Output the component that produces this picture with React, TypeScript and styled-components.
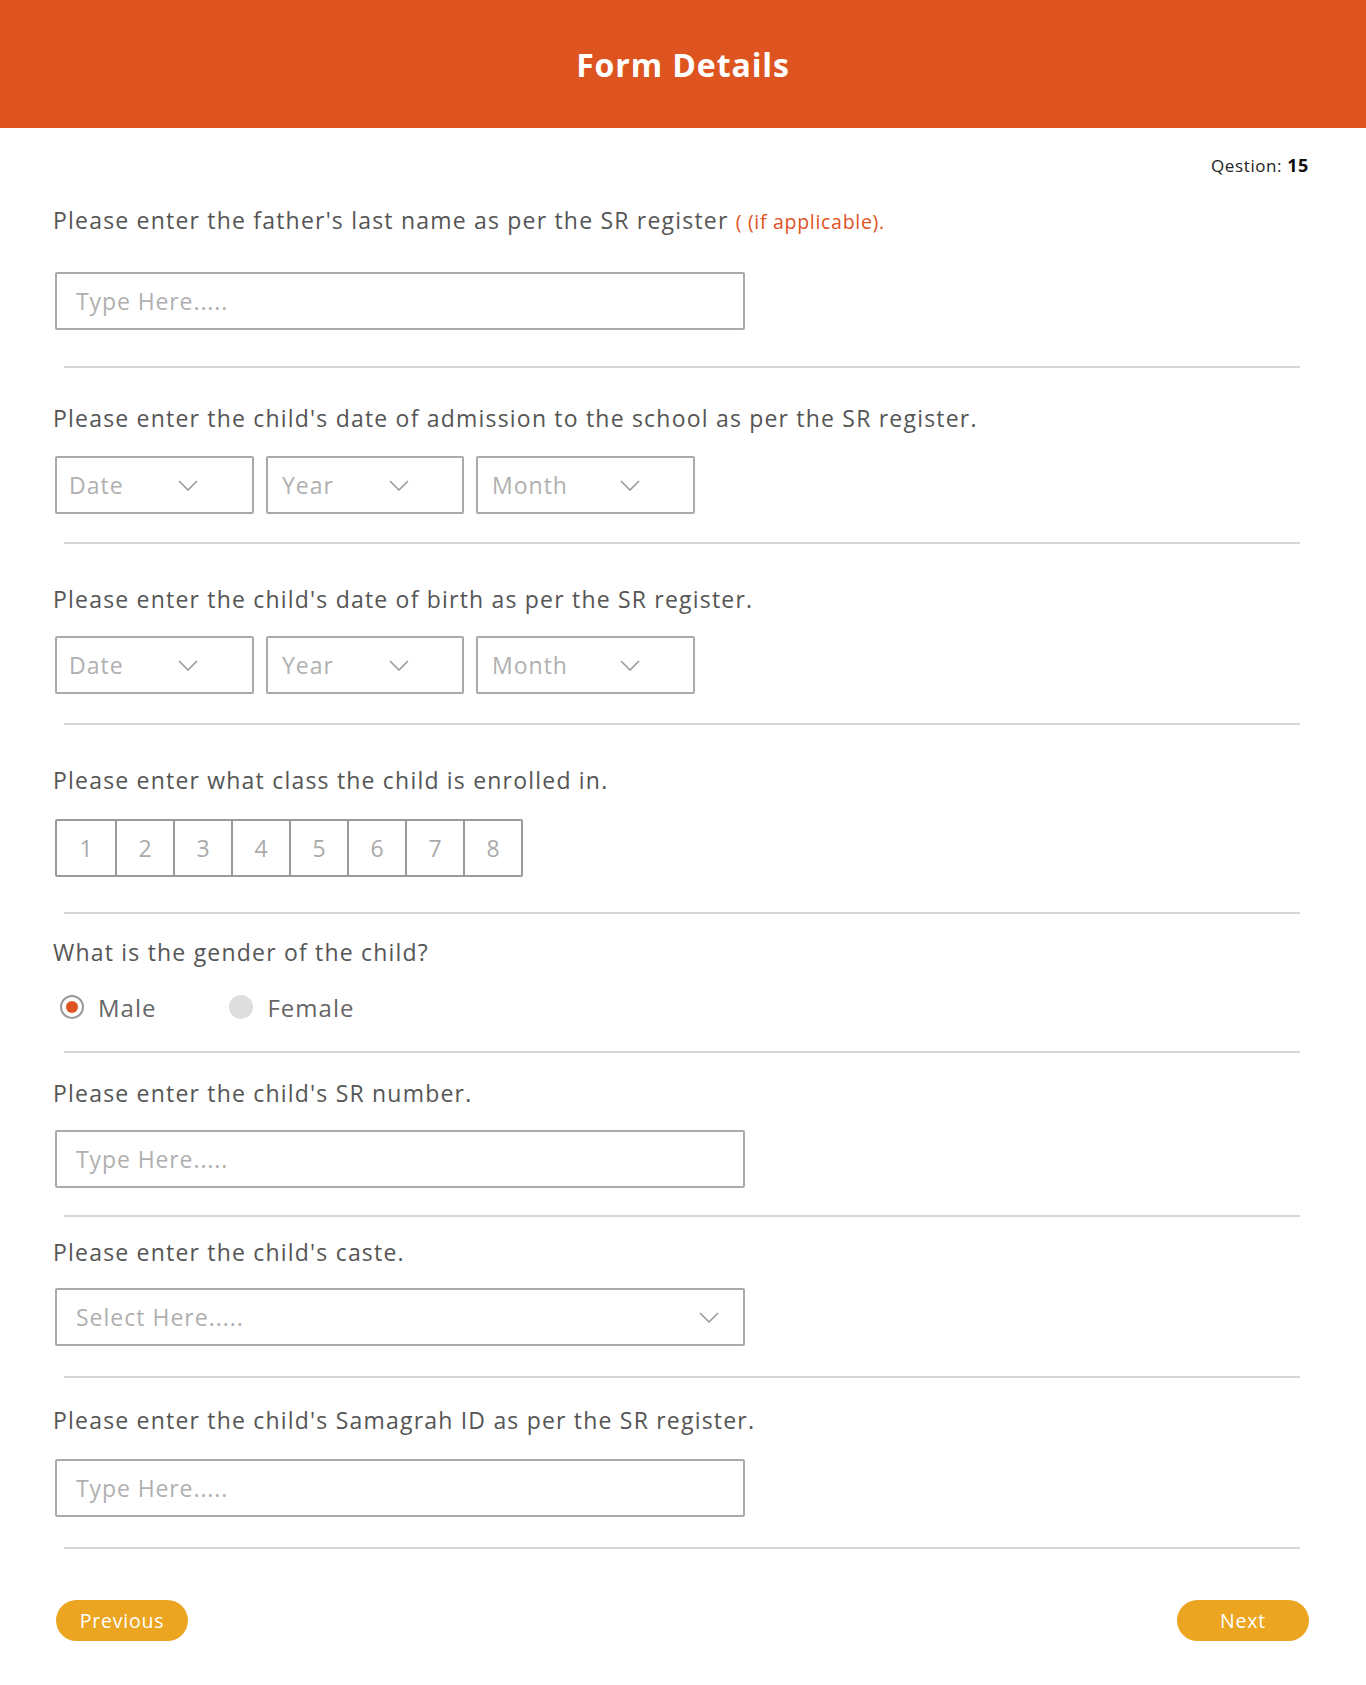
import React from "react";
import styled, { createGlobalStyle } from "styled-components";

const GlobalStyle = createGlobalStyle`
  html, body { margin: 0; padding: 0; background: #ffffff; }
  body { font-family: "Open Sans", "Noto Sans", sans-serif; color: #555555; }
  * { box-sizing: border-box; }
`;

const Page = styled.div`
  width: 1366px;
  min-height: 1685px;
  background: #fff;
`;

const Header = styled.header`
  height: 128px;
  background: #dd5420;
  display: flex;
  align-items: center;
  justify-content: center;
`;

const Title = styled.h1`
  margin: 0;
  color: #fff;
  font-size: 32px;
  font-weight: 700;
  letter-spacing: 0.9px;
`;

const Body = styled.main`
  padding: 0 57px 44px 53px;
`;

const Counter = styled.div`
  margin-top: 27px;
  text-align: right;
  font-size: 17px;
  line-height: 20px;
  color: #222;
  letter-spacing: 0.6px;
  b { font-weight: 700; font-size: 18px; color: #111; }
`;

const Section = styled.section<{ $top: number; $gap: number; $bottom: number }>`
  padding-top: ${(p) => p.$top}px;
  display: flex;
  flex-direction: column;
  align-items: flex-start;
  & > :nth-child(2) {
    margin-top: ${(p) => p.$gap}px;
    margin-left: 2px;
  }
  & > hr { margin-top: ${(p) => p.$bottom}px; }
`;

const Label = styled.p`
  margin: 0;
  font-size: 23px;
  line-height: 28px;
  color: #555;
  letter-spacing: 1.2px;
`;

const Hint = styled.span`
  color: #e0521f;
  font-size: 19.5px;
  letter-spacing: 0.7px;
`;

const Divider = styled.hr`
  align-self: stretch;
  border: none;
  height: 2px;
  background: #d6d6d6;
  margin-bottom: 0;
  margin-left: 11px;
  margin-right: 9px;
`;

const TextField = styled.input`
  width: 690px;
  height: 58px;
  border: 2px solid #aaaaaa;
  border-radius: 2px;
  padding: 0 19px;
  font-family: inherit;
  font-size: 23px;
  letter-spacing: 0.9px;
  color: #555;
  outline: none;
  &::placeholder { color: #b0b0b0; }
`;

const SelectRow = styled.div`
  display: flex;
  gap: 12px;
`;

const SelectBox = styled.div<{ $w: number; $pl: number; $pr: number }>`
  width: ${(p) => p.$w}px;
  height: 58px;
  border: 2px solid #aaaaaa;
  border-radius: 2px;
  padding: 0 ${(p) => p.$pr}px 0 ${(p) => p.$pl}px;
  display: flex;
  align-items: center;
  justify-content: space-between;
  font-size: 23px;
  letter-spacing: 1px;
  color: #b0b0b0;
`;

const Chevron = () => (
  <svg width="20" height="11" viewBox="0 0 20 11" fill="none">
    <polyline points="1,1 10,10 19,1" stroke="#9a9a9a" strokeWidth="1.6" fill="none" />
  </svg>
);

const ClassGrid = styled.div`
  display: flex;
  border: 2px solid #9a9a9a;
  border-radius: 2px;
`;

const ClassCell = styled.div`
  width: 58px;
  height: 54px;
  display: flex;
  align-items: center;
  justify-content: center;
  font-size: 23px;
  color: #aaaaaa;
  & + & { border-left: 2px solid #9a9a9a; }
`;

const RadioGroup = styled.div`
  display: flex;
  align-items: center;
  gap: 73px;
  height: 28px;
  padding-left: 5px;
`;

const RadioOption = styled.label`
  display: flex;
  align-items: center;
  gap: 14px;
  font-size: 24px;
  letter-spacing: 1px;
  color: #666;
`;

const RadioDot = styled.span<{ $checked?: boolean }>`
  width: 24px;
  height: 24px;
  border-radius: 50%;
  display: flex;
  align-items: center;
  justify-content: center;
  background: ${(p) => (p.$checked ? "#fff" : "#dedede")};
  border: ${(p) => (p.$checked ? "2px solid #9a9a9a" : "none")};
  &::after {
    content: "";
    width: 12px;
    height: 12px;
    border-radius: 50%;
    background: ${(p) => (p.$checked ? "#dd5420" : "transparent")};
  }
`;

const Footer = styled.div`
  margin-top: 51px;
  display: flex;
  justify-content: space-between;
  padding-left: 3px;
`;

const PillButton = styled.button`
  width: 132px;
  height: 41px;
  border: none;
  border-radius: 21px;
  background: #eba521;
  color: #fff;
  font-family: inherit;
  font-size: 19.5px;
  letter-spacing: 0.8px;
  cursor: pointer;
`;

const DateSelects = () => (
  <SelectRow>
    <SelectBox $w={199} $pl={12} $pr={54}>Date<Chevron /></SelectBox>
    <SelectBox $w={198} $pl={14} $pr={53}>Year<Chevron /></SelectBox>
    <SelectBox $w={219} $pl={14} $pr={53}>Month<Chevron /></SelectBox>
  </SelectRow>
);

export default function App() {
  return (
    <Page>
      <GlobalStyle />
      <Header>
        <Title>Form Details</Title>
      </Header>
      <Body>
        <Counter>
          Qestion: <b>15</b>
        </Counter>

        <Section $top={30} $gap={36} $bottom={36}>
          <Label>
            Please enter the father's last name as per the SR register <Hint>( (if applicable).</Hint>
          </Label>
          <TextField placeholder="Type Here....." />
          <Divider />
        </Section>

        <Section $top={36} $gap={24} $bottom={28}>
          <Label>Please enter the child's date of admission to the school as per the SR register.</Label>
          <DateSelects />
          <Divider />
        </Section>

        <Section $top={41} $gap={23} $bottom={29}>
          <Label>Please enter the child's date of birth as per the SR register.</Label>
          <DateSelects />
          <Divider />
        </Section>

        <Section $top={41} $gap={25} $bottom={35}>
          <Label>Please enter what class the child is enrolled in.</Label>
          <ClassGrid>
            {[1, 2, 3, 4, 5, 6, 7, 8].map((n) => (
              <ClassCell key={n}>{n}</ClassCell>
            ))}
          </ClassGrid>
          <Divider />
        </Section>

        <Section $top={24} $gap={27} $bottom={30}>
          <Label>What is the gender of the child?</Label>
          <RadioGroup>
            <RadioOption>
              <RadioDot $checked />
              Male
            </RadioOption>
            <RadioOption>
              <RadioDot />
              Female
            </RadioOption>
          </RadioGroup>
          <Divider />
        </Section>

        <Section $top={26} $gap={23} $bottom={27}>
          <Label>Please enter the child's SR number.</Label>
          <TextField placeholder="Type Here....." />
          <Divider />
        </Section>

        <Section $top={21} $gap={22} $bottom={30}>
          <Label>Please enter the child's caste.</Label>
          <SelectBox $w={690} $pl={19} $pr={24}>
            Select Here.....
            <Chevron />
          </SelectBox>
          <Divider />
        </Section>

        <Section $top={28} $gap={25} $bottom={30}>
          <Label>Please enter the child's Samagrah ID as per the SR register.</Label>
          <TextField placeholder="Type Here....." />
          <Divider />
        </Section>

        <Footer>
          <PillButton>Previous</PillButton>
          <PillButton>Next</PillButton>
        </Footer>
      </Body>
    </Page>
  );
}
